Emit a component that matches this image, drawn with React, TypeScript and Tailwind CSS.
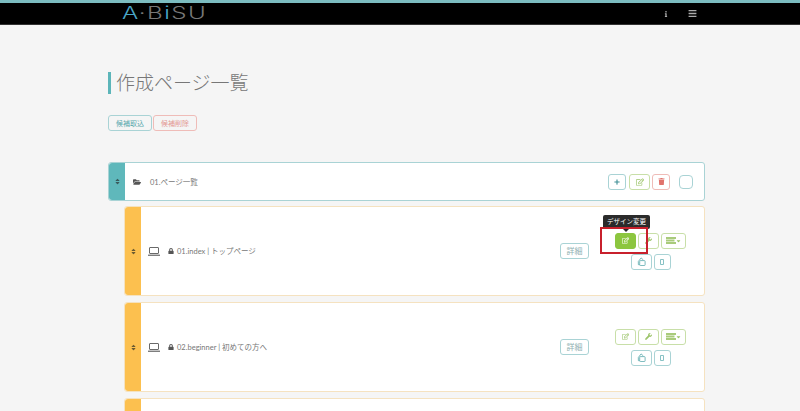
import React from 'react';
import { FaFolderOpen, FaLock, FaPlus, FaRegEdit, FaSort, FaTrash, FaWrench, FaCaretDown, FaBars, FaInfo } from 'react-icons/fa';

const teal = 'border-[#a9d3d5] text-[#5aa9ad]';
const green = 'border-[#c8dfa8] text-[#9cc46a]';

const Btn: React.FC<{ className: string; children: React.ReactNode }> = ({ className, children }) => (
  <button className={`flex h-4 items-center justify-center rounded-[3px] border text-[7px] ${className}`}>
    {children}
  </button>
);

const LaptopIcon = () => (
  <svg viewBox="0 0 12 9" className="h-[9px] w-[12px] text-[#444]" fill="none" stroke="currentColor">
    <rect x="1.5" y="0.5" width="9" height="6" rx="0.5" strokeWidth="0.8" />
    <path d="M0 8.2h12" strokeWidth="1" />
  </svg>
);

const BarsIcon = () => (
  <svg viewBox="0 0 10 7" className="h-[7px] w-[10px] text-[#a9cb7b]" fill="currentColor">
    <rect x="0" y="0" width="10" height="2" />
    <rect x="0" y="2.5" width="8.5" height="2" />
    <rect x="0" y="5" width="10" height="2" />
  </svg>
);

const CloneIcon = () => (
  <svg viewBox="0 0 10 10" className="h-[9px] w-[9px]" fill="none" stroke="currentColor" strokeWidth="0.9">
    <path d="M1.5 5 4.5 1l2.5 2.2" />
    <rect x="3" y="4" width="6" height="5.5" rx="0.8" />
    <path d="M1.5 5v3.5H3" />
  </svg>
);

const PhoneIcon = () => (
  <svg viewBox="0 0 4 6" className="h-[6px] w-[4px]" fill="none" stroke="currentColor" strokeWidth="0.8">
    <rect x="0.4" y="0.4" width="3.2" height="5.2" rx="0.6" />
  </svg>
);

const PageRow: React.FC<{ label?: string; active?: boolean }> = ({ label, active }) => (
  <div className="relative flex h-[90px] rounded-[3px] border border-[#f5e2c0] bg-white">
    <div className="flex w-[16px] shrink-0 items-center justify-center rounded-l-[3px] bg-[#fcc04f] text-[#6b5a30]">
      <FaSort className="h-[7px] w-[7px]" />
    </div>
    {label && (
      <div className="flex flex-1 items-center pl-[7px]">
        <LaptopIcon />
        <FaLock className="ml-[8px] h-[6px] w-[6px] text-[#555]" />
        <span className="ml-[3px] pt-[1px] text-[7.5px] text-[#777]">{label}</span>
        <Btn className={`ml-auto w-[29px] bg-white ${teal}`}><span className="text-[8px] text-[#8fb0b2]">詳細</span></Btn>
        <div className="ml-[26px] mr-[18px] flex flex-col items-center gap-[5px]">
          <div className="flex gap-[2px]">
            <Btn className={`w-[21px] ${active ? 'border-[#8cc63f] bg-[#8cc63f] text-white' : `bg-white ${green}`}`}><FaRegEdit /></Btn>
            <Btn className={`w-[21px] bg-white ${green}`}><FaWrench /></Btn>
            <Btn className={`w-[25px] bg-white ${green}`}><BarsIcon /><FaCaretDown className="h-[6px] w-[5px]" /></Btn>
          </div>
          <div className="flex gap-[2px]">
            <Btn className={`w-[21px] bg-white ${teal}`}><CloneIcon /></Btn>
            <Btn className={`w-[17px] bg-white ${teal}`}><PhoneIcon /></Btn>
          </div>
        </div>
      </div>
    )}
    {active && (
      <>
        <div className="absolute left-[478px] top-[8px] flex h-[14px] w-[47px] items-center justify-center rounded-[2px] bg-[#2b2b2b] text-[6.5px] text-white">デザイン変更</div>
        <div className="absolute left-[498px] top-[22px] h-0 w-0 border-x-[3px] border-t-[3px] border-x-transparent border-t-[#2b2b2b]" />
        <div className="absolute left-[475px] top-[20px] h-[27px] w-[48px] border-2 border-[#c8202c]" />
      </>
    )}
  </div>
);

export default function App() {
  return (
    <div className="h-[411px] w-[800px] overflow-hidden bg-[#f5f5f5]" style={{ fontFamily: '"Lato", "Noto Sans CJK JP", sans-serif' }}>
      <header className="flex h-[25px] items-center border-t-[3px] border-b border-t-[#7cbcc0] border-b-[#333] bg-black pl-[122px] pr-[103px]">
        <span className="origin-left scale-x-[1.42] text-[17px] font-light leading-none tracking-[1px] text-[#777]" style={{ fontFamily: '"Inter", sans-serif' }}>
          <span className="text-[#4aa7c7]">A</span>·B<span className="text-[#4aa7c7]">i</span>SU
        </span>
        <FaInfo className="ml-auto h-[6px] w-[6px] text-[#aaa]" />
        <FaBars className="ml-[19px] h-[9px] w-[9px] text-[#aaa]" />
      </header>

      <main className="ml-[108px] w-[597px]">
        <h1 className="mt-[47px] flex h-[22px] items-center border-l-[3px] border-[#5cb5b9] pl-[5px] text-[19px] font-extralight text-[#777]">作成ページ一覧</h1>

        <div className="mt-[21px] flex gap-[1px]">
          <Btn className={`w-[44px] ${teal}`}>候補取込</Btn>
          <Btn className="w-[44px] border-[#efbcb8] text-[#e39a94]">候補削除</Btn>
        </div>

        <div className="mt-[31px] flex h-[39px] rounded-[3px] border border-[#a9d3d5] bg-white">
          <div className="flex w-[16px] shrink-0 items-center justify-center rounded-l-[3px] bg-[#5fb8bb] text-[#3a5a5c]">
            <FaSort className="h-[7px] w-[7px]" />
          </div>
          <div className="flex flex-1 items-center pl-[8px]">
            <FaFolderOpen className="h-[8px] w-[8px] text-[#555]" />
            <span className="ml-[9px] pt-[2px] text-[7.5px] text-[#777]">01.ページ一覧</span>
            <Btn className={`ml-auto w-[18px] bg-white ${teal}`}><FaPlus className="h-[6px] w-[6px] text-[#3f8f96]" /></Btn>
            <Btn className={`ml-[3px] w-[21px] bg-white ${green}`}><FaRegEdit className="text-[8px]" /></Btn>
            <Btn className="ml-[2px] w-[18px] border-[#efbcb8] bg-white text-[#e0736c]"><FaTrash className="h-[7px] w-[7px]" /></Btn>
            <div className="ml-[9px] mr-[11px] h-[14px] w-[14px] rounded-[4px] border border-[#a9d3d5] bg-white" />
          </div>
        </div>

        <div className="ml-[16px] mt-[5px] flex flex-col gap-[6px]">
          <PageRow label="01.index | トップページ" active />
          <PageRow label="02.beginner | 初めての方へ" />
          <PageRow />
        </div>
      </main>
    </div>
  );
}
